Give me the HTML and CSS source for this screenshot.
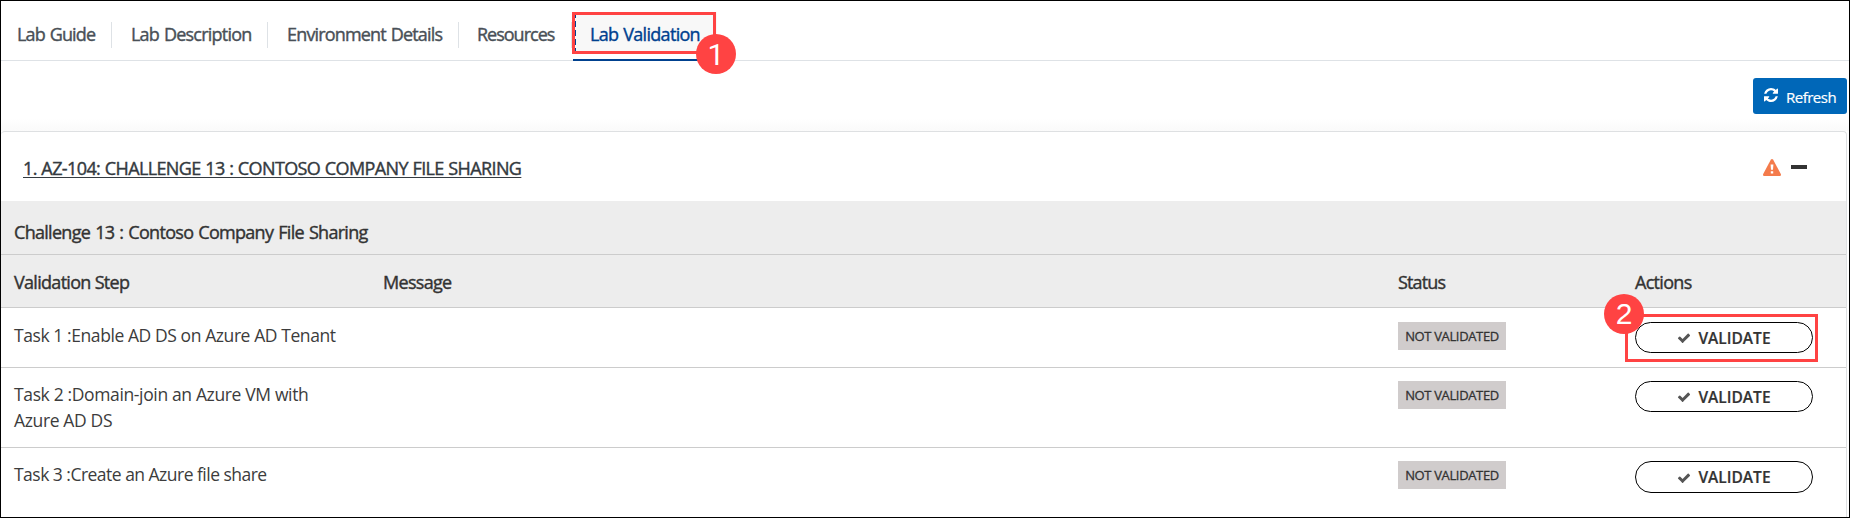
FILE: index.html
```html
<!DOCTYPE html>
<html lang="en">
<head>
<meta charset="utf-8">
<title>Lab Validation</title>
<link rel="stylesheet" href="styles.css">
</head>
<body>
<svg class="defs" aria-hidden="true">
  <symbol id="check" viewBox="0 0 1792 1792"><path d="M1671 566q0 40-28 68l-724 724-136 136q-28 28-68 28t-68-28l-136-136-362-362q-28-28-28-68t28-68l136-136q28-28 68-28t68 28l294 295 656-657q28-28 68-28t68 28l136 136q28 28 28 68z"/></symbol>
</svg>
<div class="frame">
  <nav class="tabs">
    <a class="tab t1">Lab Guide</a>
    <a class="tab t2">Lab Description</a>
    <a class="tab t3">Environment Details</a>
    <a class="tab t4">Resources</a>
    <a class="tab active"><span class="label">Lab Validation</span><span class="mark mark-tab"></span><span class="step step-one">1</span></a>
  </nav>
  <div class="toolbar">
    <button class="refresh"><svg viewBox="0 0 1536 1536"><path d="M1511 928q0 5-1 7-64 268-268 434.500T764 1536q-146 0-282.500-55T238 1324l-129 129q-19 19-45 19t-45-19-19-45V960q0-26 19-45t45-19h448q26 0 45 19t19 45-19 45l-137 137q71 66 161 102t187 36q134 0 250-65t186-179q11-17 53-117 8-23 30-23h192q13 0 22.500 9.500t9.500 22.500zm25-800v448q0 26-19 45t-45 19h-448q-26 0-45-19t-19-45 19-45l138-138Q969 256 768 256q-134 0-250 65T332 500q-11 17-53 117-8 23-30 23H50q-13 0-22.500-9.500T18 608v-7q65-268 270-434.500T768 0q146 0 284 55.500T1297 212l130-129q19-19 45-19t45 19 19 45z"/></svg><span>Refresh</span></button>
  </div>
  <section class="panel">
    <header class="panel-head">
      <a class="title">1. AZ-104: CHALLENGE 13 : CONTOSO COMPANY FILE SHARING</a>
      <div class="head-icons">
        <svg class="warn" viewBox="0 0 18 17"><path d="M9 0Q9.700 0 10.200.8L17.800 15Q18.500 17 16.800 17H1.200Q-.5 17 .2 15L7.800.8Q8.300 0 9 0Z"/><path class="bang" d="M7.600 5.500h2.800l-.4 5.300h-2zM7.800 12.200h2.400v2.300H7.800z"/></svg>
        <span class="minus"></span>
      </div>
    </header>
    <div class="row caption"><span>Challenge 13 : Contoso Company File Sharing</span></div>
    <div class="row heads"><span class="h1">Validation Step</span><span class="h2">Message</span><span class="h3">Status</span><span class="h4">Actions</span></div>
    <div class="row task r1">
      <p class="k1">Task 1 :Enable AD DS on Azure AD Tenant</p><p></p>
      <div><span class="status">NOT VALIDATED</span></div>
      <div class="action"><button class="validate"><svg><use href="#check"/></svg><span>VALIDATE</span></button><span class="mark mark-action"></span><span class="step step-two">2</span></div>
    </div>
    <div class="row task r2">
      <p class="k2">Task 2 :Domain-join an Azure VM with<br>Azure AD DS</p><p></p>
      <div><span class="status">NOT VALIDATED</span></div>
      <div class="action"><button class="validate"><svg><use href="#check"/></svg><span>VALIDATE</span></button></div>
    </div>
    <div class="row task r3">
      <p class="k3">Task 3 :Create an Azure file share</p><p></p>
      <div><span class="status">NOT VALIDATED</span></div>
      <div class="action"><button class="validate tall"><svg><use href="#check"/></svg><span>VALIDATE</span></button></div>
    </div>
  </section>
</div>
</body>
</html>
```

FILE: styles.css
```css
* { box-sizing: border-box; }
body { margin: 0; font-family: "Open Sans", "Noto Sans", sans-serif; font-size: 18px; color: #333; background: #fff; }
button { font-family: inherit; margin: 0; }
p { margin: 0; }
.defs { position: absolute; width: 0; height: 0; }
.frame { width: 1850px; height: 518px; border: 1px solid #000; overflow: hidden; display: flex; flex-direction: column; }
.tabs { height: 60px; flex: none; border-bottom: 1px solid #dee2e6; display: flex; align-items: flex-start; padding-top: 21px; }
.tab { height: 26px; line-height: 24px; white-space: nowrap; -webkit-text-stroke: .4px; color: #495057; border-right: 1px solid #dee2e6; padding-left: 19px; word-spacing: 1px; }
.t1 { width: 111px; padding-left: 16px; letter-spacing: -.85px; }
.t2 { width: 156px; letter-spacing: -.78px; }
.t3 { width: 191px; letter-spacing: -.83px; }
.t4 { width: 113px; letter-spacing: -1px; padding-left: 18px; }
.tab.active { position: relative; width: 144px; height: 42px; margin: -10px 0 0 1px; padding: 10px 0 0 17px; border: 0; background: #f8f8f8; color: #00418f; letter-spacing: -.7px; }
.tab.active::after { content: ""; position: absolute; left: 0; top: 47px; width: 144px; height: 2px; background: #00418f; }
.mark { position: absolute; border: 3px solid #ff4343; }
.mark-tab { left: -1px; top: 0; width: 144px; height: 42px; }
.mark-tab::before { content: ""; position: absolute; left: 0; top: 0; width: 1px; height: 36px; background: repeating-linear-gradient(#00418f 0 3px, transparent 3px 6px, #00418f 6px 9px); }
.step { position: absolute; width: 40px; height: 40px; border-radius: 50%; background: #ff4343; color: #fff; font: 30px/40px "Liberation Sans", Arial, sans-serif; letter-spacing: 0; -webkit-text-stroke: 0; text-align: center; z-index: 2; }
.step-one { left: 123px; top: 22px; font-family: Roboto, sans-serif; line-height: 41px; }
.toolbar { height: 70px; flex: none; display: flex; justify-content: flex-end; padding: 17px 2px 0 0; background: linear-gradient(#fff 82%, #fafafa); }
.refresh { width: 94px; height: 36px; border: 0; border-radius: 3px; background: #0067b8; color: #fff; display: flex; align-items: center; padding: 0 0 0 11px; gap: 8px; font-size: 15px; }
.refresh svg { width: 14px; height: 14px; fill: #fff; margin-top: -2px; flex: none; }
.refresh span { padding-top: 2px; letter-spacing: -.5px; -webkit-text-stroke: .2px; }
.panel { flex: 1; width: 1846px; border: 1px solid #dee0e2; border-width: 1px 1px 0 0; border-radius: 4px 4px 0 0; }
.panel-head { height: 69px; display: flex; justify-content: space-between; align-items: center; padding: 0 39px 0 22px; }
.title { white-space: nowrap; -webkit-text-stroke: .4px; color: #343a40; letter-spacing: -.61px; word-spacing: .5px; text-decoration: underline; text-underline-offset: 2px; text-decoration-thickness: 1px; padding-top: 2px; }
.head-icons { display: flex; align-items: center; gap: 10px; padding-top: 1px; }
.warn { width: 18px; height: 17px; fill: #f47b4b; }
.warn .bang { fill: #fff; }
.minus { width: 16px; height: 4px; background: #333; }
.row { display: grid; grid-template-columns: 369px 1015px 237px 211px; padding-left: 13px; border-bottom: 1px solid #ccc; }
.caption, .heads { height: 54px; background: #ededed; -webkit-text-stroke: .4px; white-space: nowrap; align-items: center; letter-spacing: -.7px; }
.caption { padding-top: 8px; letter-spacing: -.7px; word-spacing: 1px; }
.heads { height: 53px; padding-top: 1px; }
.h3 { letter-spacing: -.85px; }
.task { padding-top: 14px; align-items: start; }
.task p { white-space: nowrap; line-height: 26px; letter-spacing: -.42px; color: #3c3c3c; font-size: 17.500px; }
.task .k2 { letter-spacing: -.36px; }
.task .k3 { letter-spacing: -.52px; }
.r1 { height: 60px; }
.r2 { height: 80px; padding-top: 13px; }
.r3 { height: 70px; border: 0; padding-top: 13px; }
.status { display: block; width: 108px; height: 28px; line-height: 28px; background: #d0cccc; text-align: center; font-size: 13px; -webkit-text-stroke: .3px; white-space: nowrap; letter-spacing: -.35px; }
.action { position: relative; }
.validate { width: 178px; height: 31px; border: 1px solid #000; border-radius: 16px; background: #fff; color: #333; padding: 0; display: flex; align-items: center; justify-content: center; gap: 7px; font-size: 15.500px; font-weight: 600; -webkit-text-stroke: .2px; }
.validate.tall { height: 32px; }
.validate svg { width: 14px; height: 14px; fill: #555; margin-top: 1px; stroke: none; }
.mark-action { left: -10px; top: -8px; width: 193px; height: 48px; }
.step-two { left: -31px; top: -28px; }
```
